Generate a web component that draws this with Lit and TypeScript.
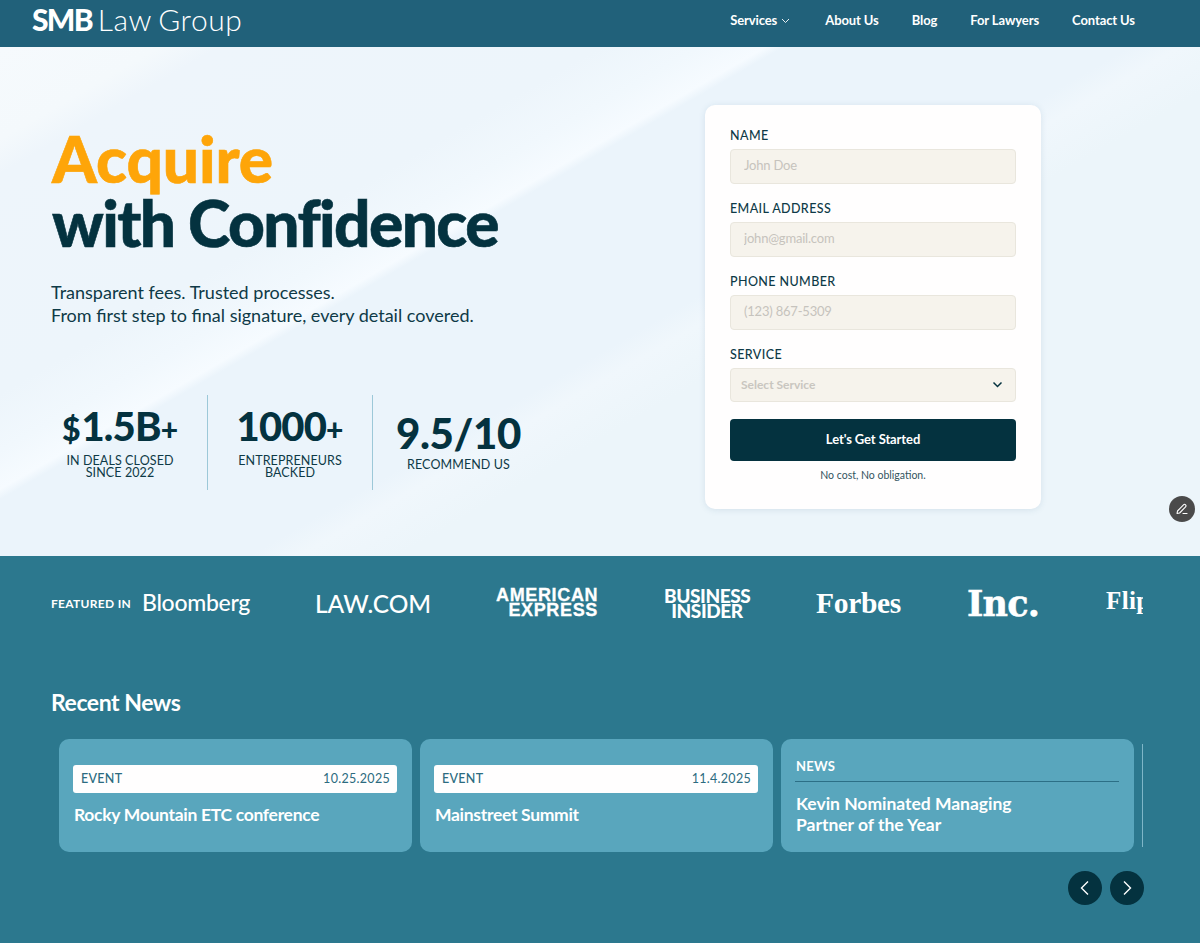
import { css, html, LitElement } from 'lit';
import { customElement } from 'lit/decorators.js';

const fields = [
  { label: 'NAME', placeholder: 'John Doe' },
  { label: 'EMAIL ADDRESS', placeholder: 'john@gmail.com' },
  { label: 'PHONE NUMBER', placeholder: '(123) 867-5309' },
];

@customElement('app-root')
export class AppRoot extends LitElement {
  static styles = css`
    :host {
      display: block;
      width: 1200px;
      height: 949px;
      background: #ffffff;
      font-family: Lato, 'Noto Sans', sans-serif;
      color: #04323f;
    }

    * {
      box-sizing: border-box;
    }

    .header {
      height: 47px;
      background: #21617a;
      color: #ffffff;
      display: flex;
      align-items: center;
      justify-content: space-between;
      padding: 0 65px 0 32px;
    }

    .brand {
      font-size: 30px;
      line-height: 32px;
      font-weight: 300;
      letter-spacing: 0.6px;
      word-spacing: -2px;
      white-space: nowrap;
      margin-bottom: 9px;
    }

    .brand b {
      font-weight: 900;
      letter-spacing: -1.7px;
      margin-right: -1px;
    }

    .nav {
      display: flex;
      gap: 33px;
      font-size: 13px;
      font-weight: 700;
      letter-spacing: -0.1px;
      margin-bottom: 7px;
    }

    .nav span {
      display: flex;
      align-items: center;
      gap: 4px;
    }

    .nav .services {
      margin-right: 2px;
    }

    .hero {
      position: relative;
      height: 509px;
      display: flex;
      justify-content: space-between;
      padding: 58px 159px 0 51px;
      background: linear-gradient(
        150deg,
        #f6fafd 0,
        #f4f9fc 80px,
        #eef5fb 110px,
        #edf5fb 300px,
        #f1f8fd 350px,
        #f6fbff 383px,
        #ebf4fb 392px,
        #ebf4fb 565px,
        #f0f7fc 590px,
        #ecf5fa 640px,
        #ecf5fa 100%
      );
    }

    .copy {
      display: flex;
      flex-direction: column;
    }

    h1 {
      margin: 22px 0 0 1px;
      font-size: 64px;
      line-height: 64px;
      font-weight: 900;
      letter-spacing: -1.6px;
      -webkit-text-stroke: 0.6px currentColor;
    }

    h1 em {
      display: block;
      font-style: normal;
      color: #fea509;
      letter-spacing: -0.1px;
    }

    .sub {
      margin: 26px 0 0;
      font-size: 18px;
      line-height: 23px;
      color: #0e3a47;
    }

    .stats {
      display: flex;
      margin-top: 68px;
    }

    .stat {
      height: 95px;
      display: flex;
      flex-direction: column;
      align-items: center;
      justify-content: center;
      text-align: center;
      padding-bottom: 1px;
      border-right: 1px solid #9cc8d8;
    }

    .stat.first {
      width: 157px;
      padding-right: 18px;
    }

    .stat.second {
      width: 165px;
    }

    .stat.third {
      width: 171px;
      border-right: 0;
    }

    .value {
      font-size: 40px;
      line-height: 42px;
      font-weight: 900;
      letter-spacing: -0.8px;
      margin-bottom: 5px;
    }

    .third .value {
      font-size: 42px;
      letter-spacing: -0.4px;
    }

    .value small {
      font-size: 30px;
      letter-spacing: 0;
    }

    .value small.dollar {
      font-size: 32px;
      margin-right: 1px;
    }

    .label {
      font-size: 12.5px;
      line-height: 12.5px;
      letter-spacing: 0.1px;
      color: #0e3a47;
    }

    .form {
      width: 336px;
      height: 404px;
      background: #fffefe;
      border-radius: 10px;
      padding: 24px 25px 0;
      box-shadow: 0 1px 6px rgba(90, 130, 160, 0.16);
    }

    .field {
      height: 73px;
    }

    .field.last {
      height: auto;
    }

    .field label {
      display: block;
      font-size: 12.5px;
      line-height: 14px;
      font-weight: 500;
      letter-spacing: 0.4px;
      color: #0e3a47;
      margin-bottom: 6px;
    }

    .field input,
    .select {
      display: block;
      width: 100%;
      height: 35px;
      background: #f6f3ec;
      border: 1px solid #e9e6dd;
      border-radius: 4px;
      padding: 0 13px 3px;
      font: 400 13px Lato, sans-serif;
      letter-spacing: -0.2px;
      outline: none;
    }

    .field input::placeholder {
      color: #c6c3bd;
      opacity: 1;
    }

    .select {
      height: 34px;
      display: flex;
      align-items: center;
      justify-content: space-between;
      padding: 0 12px 2px 10px;
      font-size: 12px;
      font-weight: 700;
      letter-spacing: 0;
      color: #c9c6c0;
    }

    .submit {
      display: block;
      width: 100%;
      height: 42px;
      margin-top: 17px;
      padding: 0 0 3px;
      border: 0;
      border-radius: 4px;
      background: #04323f;
      color: #ffffff;
      font: 700 13px Lato, sans-serif;
      letter-spacing: -0.1px;
    }

    .note {
      margin: 7px 0 0;
      text-align: center;
      font-size: 10.5px;
      line-height: 14px;
      color: #33555f;
    }

    .edit {
      position: absolute;
      left: 1169px;
      top: 449px;
      width: 26px;
      height: 26px;
      border-radius: 50%;
      background: #4a4a4a;
      display: flex;
      align-items: center;
      justify-content: center;
    }

    .lower {
      height: 387px;
      background: #2c788e;
      color: #ffffff;
      padding-top: 24px;
    }

    .featured {
      display: flex;
      align-items: center;
      height: 46px;
      padding: 0 57px 0 51px;
    }

    .featured-label {
      flex: none;
      width: 91px;
      font-size: 12px;
      font-weight: 700;
      letter-spacing: 0.3px;
      white-space: nowrap;
    }

    .logos {
      flex: 1;
      min-width: 0;
      overflow: hidden;
      display: flex;
      align-items: center;
      gap: 66px;
      height: 46px;
      white-space: nowrap;
    }

    .logo {
      flex: none;
    }

    .bloomberg {
      width: 107px;
      font-size: 23px;
      font-weight: 500;
      letter-spacing: -0.3px;
      padding-bottom: 3px;
    }

    .lawcom {
      width: 115px;
      font-size: 24.5px;
      font-weight: 500;
    }

    .amex {
      width: 102px;
      font: 700 18px/15.5px 'Liberation Sans', sans-serif;
      text-align: right;
      letter-spacing: 0.65px;
      -webkit-text-stroke: 0.3px #ffffff;
    }

    .insider {
      width: 86px;
      font: 900 19px/15.5px Lato, sans-serif;
      text-align: center;
      letter-spacing: -0.4px;
    }

    .forbes {
      width: 85px;
      font: 700 29.5px 'Liberation Serif', serif;
      letter-spacing: -0.3px;
    }

    .inc {
      width: 73px;
      font: 700 35px 'DejaVu Serif', serif;
      letter-spacing: -0.8px;
      -webkit-text-stroke: 0.5px #ffffff;
    }

    .flip {
      width: 60px;
      font: 700 25px 'Liberation Serif', serif;
      letter-spacing: 0.4px;
      padding-bottom: 4px;
    }

    h2 {
      margin: 62px 0 0 51px;
      font-size: 23px;
      line-height: 28px;
      font-weight: 700;
      letter-spacing: -0.45px;
    }

    .track {
      display: flex;
      gap: 8px;
      margin: 23px 0 0 59px;
      width: 1085px;
      overflow: hidden;
    }

    .card {
      flex: none;
      width: 353px;
      height: 113px;
      border-radius: 10px;
      background: #59a6bd;
      padding: 26px 15px 0 14px;
    }

    .strip {
      height: 28px;
      background: #fffefe;
      border-radius: 3px;
      display: flex;
      align-items: center;
      justify-content: space-between;
      padding: 0 7px 1px 8px;
      font-size: 12.5px;
      letter-spacing: 0.3px;
      color: #2c6b80;
    }

    .strip b {
      font-weight: 500;
    }

    .title {
      margin: 11px 0 0 1px;
      font-size: 17.5px;
      line-height: 21px;
      font-weight: 700;
      letter-spacing: -0.3px;
    }

    .card.news .kicker {
      height: 24px;
      margin-top: -7px;
      padding: 1px 0 0 1px;
      font-size: 13px;
      line-height: 15px;
      font-weight: 700;
      letter-spacing: 0.2px;
      border-bottom: 1px solid #2c6f86;
    }

    .card.news .title {
      margin-top: 11px;
      letter-spacing: -0.02px;
    }

    .sliver {
      flex: none;
      width: 1px;
      height: 103px;
      margin-top: 5px;
      background: #7fb6c8;
    }

    .controls {
      display: flex;
      justify-content: flex-end;
      gap: 8px;
      margin: 19px 56px 0 0;
    }

    .controls button {
      width: 34px;
      height: 34px;
      padding: 0;
      border: 0;
      border-radius: 50%;
      background: #04323f;
      display: flex;
      align-items: center;
      justify-content: center;
    }
  `;

  render() {
    return html`
      <header class="header">
        <div class="brand"><b>SMB</b> Law Group</div>
        <nav class="nav">
          <span class="services">
            Services
            <svg width="9" height="9" viewBox="0 0 9 9" fill="none" stroke="#fff" stroke-width="0.9">
              <path d="M1 3l3.5 3.5L8 3" />
            </svg>
          </span>
          <span>About Us</span>
          <span>Blog</span>
          <span>For Lawyers</span>
          <span>Contact Us</span>
        </nav>
      </header>

      <section class="hero">
        <div class="copy">
          <h1><em>Acquire</em>with Confidence</h1>
          <p class="sub">
            Transparent fees. Trusted processes.<br />
            From first step to final signature, every detail covered.
          </p>
          <div class="stats">
            <div class="stat first">
              <div class="value"><small class="dollar">$</small>1.5B<small>+</small></div>
              <div class="label">IN DEALS CLOSED</div>
              <div class="label">SINCE 2022</div>
            </div>
            <div class="stat second">
              <div class="value">1000<small>+</small></div>
              <div class="label">ENTREPRENEURS</div>
              <div class="label">BACKED</div>
            </div>
            <div class="stat third">
              <div class="value">9.5/10</div>
              <div class="label">RECOMMEND US</div>
            </div>
          </div>
        </div>

        <form class="form">
          ${fields.map(
            (f) => html`<div class="field">
              <label>${f.label}</label>
              <input placeholder=${f.placeholder} />
            </div>`
          )}
          <div class="field last">
            <label>SERVICE</label>
            <div class="select">
              Select Service
              <svg width="11" height="11" viewBox="0 0 11 11" fill="none" stroke="#04323f" stroke-width="1.5">
                <path d="M1.5 3.5l4 4 4-4" />
              </svg>
            </div>
          </div>
          <button class="submit" type="button">Let's Get Started</button>
          <p class="note">No cost, No obligation.</p>
        </form>

        <div class="edit">
          <svg width="14" height="14" viewBox="0 0 14 14" fill="none" stroke="#fff" stroke-width="1.1" stroke-linejoin="round" stroke-linecap="round">
            <path d="M2.5 9l6-6.2c.6-.6 1.5-.6 2.1 0s.6 1.4 0 2L4.6 11l-2.6.5z" />
            <path d="M8 11.5h4" />
          </svg>
        </div>
      </section>

      <section class="lower">
        <div class="featured">
          <div class="featured-label">FEATURED IN</div>
          <div class="logos">
            <div class="logo bloomberg">Bloomberg</div>
            <div class="logo lawcom">LAW.COM</div>
            <div class="logo amex">AMERICAN<br />EXPRESS</div>
            <div class="logo insider">BUSINESS<br />INSIDER</div>
            <div class="logo forbes">Forbes</div>
            <div class="logo inc">Inc.</div>
            <div class="logo flip">Flip</div>
          </div>
        </div>

        <h2>Recent News</h2>

        <div class="track">
          <article class="card">
            <div class="strip"><b>EVENT</b><span>10.25.2025</span></div>
            <div class="title">Rocky Mountain ETC conference</div>
          </article>
          <article class="card">
            <div class="strip"><b>EVENT</b><span>11.4.2025</span></div>
            <div class="title">Mainstreet Summit</div>
          </article>
          <article class="card news">
            <div class="kicker">NEWS</div>
            <div class="title">Kevin Nominated Managing<br />Partner of the Year</div>
          </article>
          <div class="sliver"></div>
        </div>

        <div class="controls">
          <button type="button" aria-label="Previous">
            <svg width="14" height="16" viewBox="0 0 14 16" fill="none" stroke="#fff" stroke-width="1.4">
              <path d="M10 1.5L3.5 8l6.5 6.5" />
            </svg>
          </button>
          <button type="button" aria-label="Next">
            <svg width="14" height="16" viewBox="0 0 14 16" fill="none" stroke="#fff" stroke-width="1.4">
              <path d="M4 1.5L10.5 8 4 14.5" />
            </svg>
          </button>
        </div>
      </section>
    `;
  }
}
